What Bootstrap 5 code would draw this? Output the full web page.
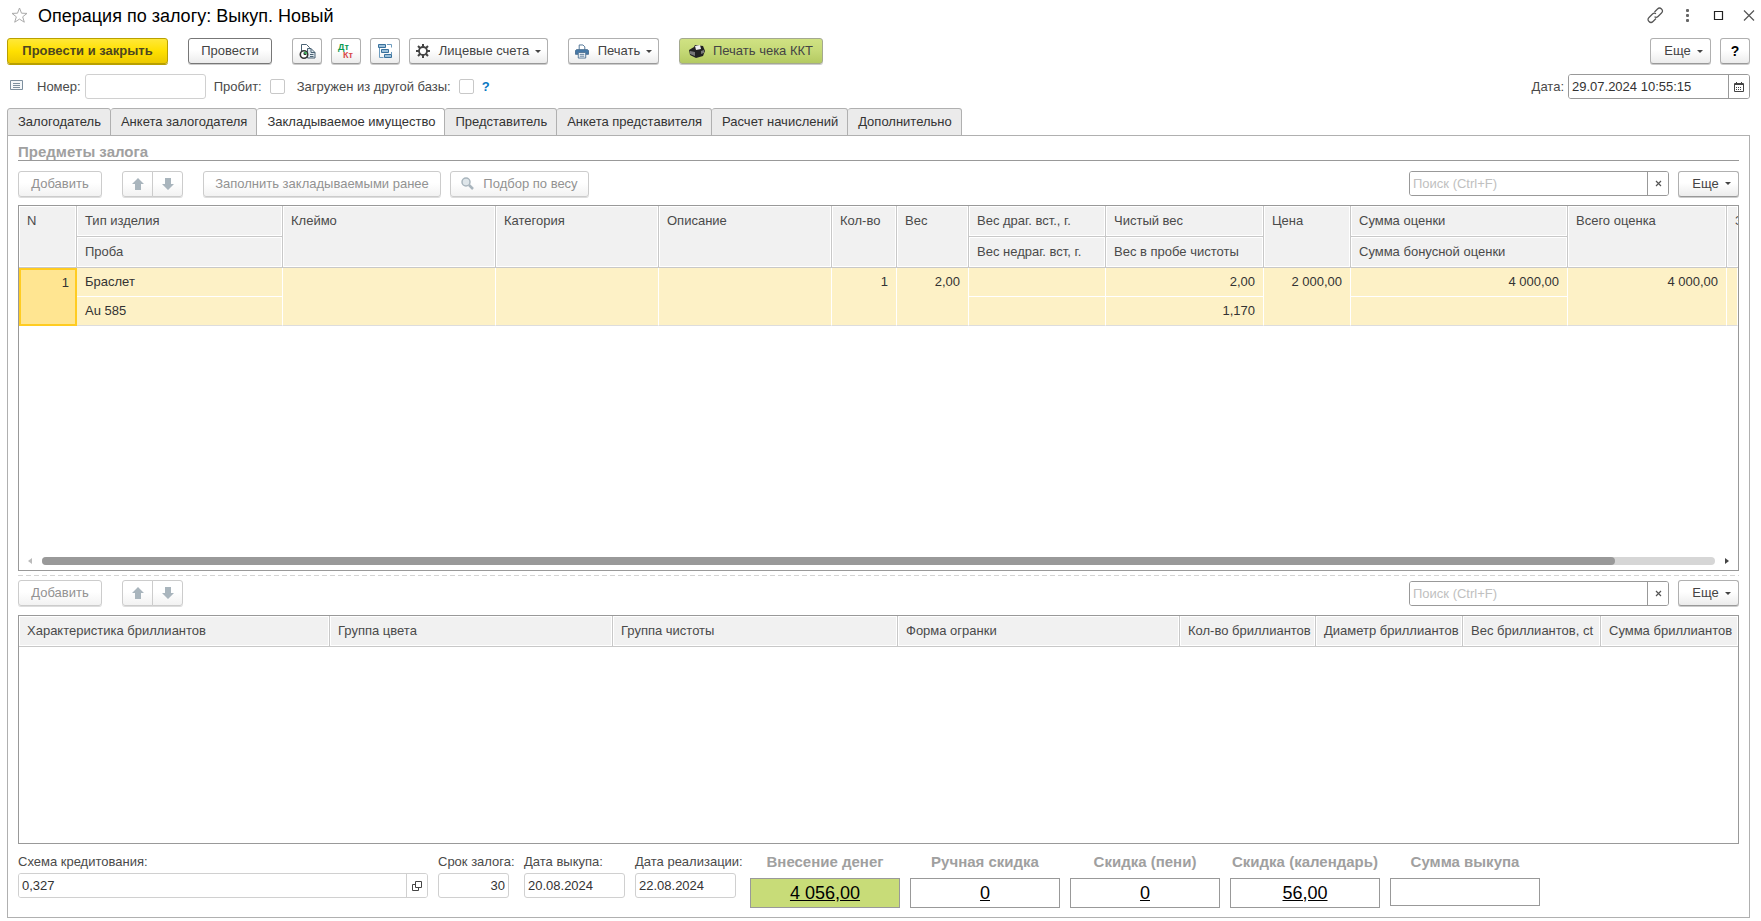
<!DOCTYPE html>
<html lang="ru">
<head>
<meta charset="utf-8">
<meta name="viewport" content="width=device-width, initial-scale=1">
<title>Операция по залогу: Выкуп. Новый</title>
<link rel="stylesheet" href="https://cdn.jsdelivr.net/npm/bootstrap@5.3.0/dist/css/bootstrap.min.css">
<style>
  body { font: 13px/16px "Liberation Sans", Arial, sans-serif; color: #4a4a4a; background: #fff; }
  .app { min-height: 100vh; padding: 0 11px 3px 7px; }
  svg { flex-shrink: 0; }
  h1 { font-size: 18px; line-height: 22px; color: #000; }
  .title-row { height: 31px; margin-right: -5px; }
  .tool-row { height: 26px; margin-top: 7px; }
  .field-row { margin-top: 10px; height: 25px; }

  .cmd { height: 26px; padding: 0 8px; border: 1px solid #b0b0b0; border-bottom-color: #999; border-radius: 3px;
    background: linear-gradient(#fff 45%, #ececec); box-shadow: 0 1px 0 #ccc; color: #444;
    font-size: 13px; line-height: 16px; display: inline-flex; align-items: center; justify-content: center; white-space: nowrap; }
  .cmd:hover { background: #f2f2f2; }
  .cmd:disabled { opacity: 1; color: #929292; border-color: #ccc; background: linear-gradient(#fff 45%, #f2f2f2); box-shadow: 0 1px 0 #ddd; }
  .cmd-main { background: linear-gradient(#ffe838, #ffe000 50%, #ecc900); border-color: #b9a000; box-shadow: 0 1px 0 #b9a000; font-weight: bold; color: #4d4620; width: 161px; }
  .cmd-plain { border-color: #777; width: 84px; }
  .cmd-green { background: linear-gradient(#d0e283, #c5d976 50%, #b4ca62); border-color: #a4a98f; width: 144px; }
  .cmd-sq { width: 30px; padding: 0; }
  .cmd-arrow { width: 31px; padding: 0; }
  .cmd-more { width: 61px; padding: 0 0 0 6px; }
  .cmd-help { font-weight: bold; font-size: 14px; color: #000; }
  .caret { border: 3px solid transparent; border-top-color: #444; border-bottom: 0; margin-left: 6px; }
  .w-acc { width: 139px; } .w-print { width: 91px; } .w-add { width: 84px; } .w-fill { width: 238px; } .w-pick { width: 139px; }
  .gap-9 { gap: 9px; } .gap-20 { gap: 20px; } .gap-10 { gap: 10px; }
  .ico { margin-right: 9px; }

  .box { height: 25px; padding: 0 3px; font-size: 13px; line-height: 16px; border: 1px solid #d0d0d0; border-radius: 3px; color: #333; background: #fff; min-width: 0; }
  .box::placeholder { color: #c0c0c0; opacity: 1; }
  .group { height: 25px; border: 1px solid #d0d0d0; border-radius: 3px; overflow: hidden; }
  .group .box { border: 0; border-radius: 0; height: 23px; flex: 1; }
  .group button { border: 0; border-left: 1px solid #d0d0d0; background: #fff; width: 21px; padding: 0; display: flex; align-items: center; justify-content: center; color: #444; }
  .group-dark, .group-dark button { border-color: #999; }
  .w-date { width: 182px; } .w-find { width: 260px; } .w-num { width: 121px; }
  .tick { appearance: none; width: 15px; height: 15px; margin: 0; border: 1px solid #c8c8c8; border-radius: 2px; background: #fff; }
  .hint { color: #0a78c2; font-weight: bold; text-decoration: none; margin-left: 8px; }
  .field-ico { margin: 0 14px 4px 3px; }

  .tabs { margin-top: 9px; margin-bottom: -1px; }
  .tabs .nav-link { height: 28px; padding: 0 9px 0 10px; border: 1px solid #b0b0b0; border-left-width: 0; border-radius: 3px 3px 0 0; background: #ebebeb; color: #333; display: flex; align-items: center; justify-content: center; }
  .tabs li:first-child .nav-link { border-left-width: 1px; }
  .tabs .nav-link.active { background: #fff; border-bottom-color: #fff; }
  .pane { border: 1px solid #b0b0b0; padding: 8px 10px 9px; flex: 1; }
  .caption { font-size: 15px; font-weight: bold; color: #a0a0a0; line-height: 16px; }
  h2.caption { border-bottom: 1px solid #999; margin: 0 0 9px; height: 17px; }
  .bar { height: 27px; }

  .frame { border: 1px solid #999; overflow: hidden; flex-basis: 0; margin-top: 8px; }
  .frame-a { flex-grow: 366; }
  .frame-b { flex-grow: 229; }
  .grid { table-layout: fixed; width: 100%; border-collapse: separate; border-spacing: 0; }
  .grid th { height: 31px; padding: 0 0 0 8px; font-weight: normal; background: #f1f1f1; border-right: 1px solid #c8c8c8; border-bottom: 1px solid #c8c8c8; box-shadow: inset 0 0 0 1px #fff; vertical-align: top; line-height: 29px; white-space: nowrap; overflow: hidden; }
  .grid td { height: 29px; padding: 0 8px; background: #fdf1c6; color: #333; border-right: 1px solid #fff; border-bottom: 1px solid #fff; vertical-align: top; line-height: 28px; white-space: nowrap; overflow: hidden; }
  .grid td.num { text-align: right; }
  .grid td.cur { background: #ffe591; border: 2px solid #fc2; line-height: 25px; padding: 0 6px; }
  .grid tbody tr:last-child td, .grid tbody td[rowspan]:not(.cur) { border-bottom-color: #ddd; }
  .grid th.edge, .frame-b th:last-child { border-right: 0; }

  .scroll { height: 14px; padding: 0 8px 3px 9px; }
  .track { height: 8px; border-radius: 4px; background: #d6d6d6; margin: 0 10px 0 9px; }
  .thumb { height: 8px; border-radius: 4px; background: #999; width: 94%; }
  .split { height: 1px; margin: 4px 0; background: repeating-linear-gradient(90deg, #d4d4d4 0 5px, #fff 5px 8px); }

  .totals { margin-top: 10px; height: 54px; }
  .totals .lab { height: 16px; margin-bottom: 3px; white-space: nowrap; display: block; }
  .w-scheme { width: 410px; } .w-term { width: 71px; } .w-day { width: 101px; }
  .apart { margin-right: 5px; }
  .sum { width: 150px; text-align: center; }
  .sum .caption { height: 16px; margin-bottom: 8px; white-space: nowrap; display: block; }
  .money { display: block; width: 100%; height: 30px; border: 1px solid #999; border-radius: 0; text-align: center; font-size: 18px; text-decoration: underline; color: #000; background: #fff; padding: 0; }
  .money-on { background: #c8dc78; }
  .money-low { height: 28px; }
</style>
</head>
<body>
<main class="app d-flex flex-column">
  <header class="title-row d-flex align-items-center gap-10">
    <svg class="ms-1" width="17" height="17" viewBox="0 0 17 17" fill="none" stroke="#aaa"><path d="M8.500 1l2 5.200 5.500.2-4.300 3.400 1.600 5.400-4.800-3.100-4.800 3.100 1.600-5.400L1 6.400l5.500-.2z"/></svg>
    <h1 class="m-0">Операция по залогу: Выкуп. Новый</h1>
    <svg class="ms-auto" width="108" height="17" viewBox="0 0 108 17" fill="none" stroke="#555" stroke-width="1.200">
      <path d="M7.500 5l3-3a2.800 2.800 0 0 1 4 4L11 9.500a2.800 2.800 0 0 1-3.500.3M9 11.500L6 14.500a2.800 2.800 0 0 1-4-4L5.500 7a2.800 2.800 0 0 1 3.500-.3"/>
      <g fill="#666" stroke="none"><rect x="39" y="2" width="3" height="3" rx="1"/><rect x="39" y="7" width="3" height="3" rx="1"/><rect x="39" y="12" width="3" height="3" rx="1"/></g>
      <path stroke="#222" d="M67.500 4.500h8v8h-8z"/><path d="M97 3.500l10 10M107 3.500l-10 10"/>
    </svg>
  </header>

  <div class="tool-row d-flex gap-20">
    <button class="btn cmd cmd-main">Провести и закрыть</button>
    <button class="btn cmd cmd-plain">Провести</button>
    <div class="d-flex gap-9">
      <button class="btn cmd cmd-sq" aria-label="История"><svg width="17" height="17" viewBox="0 0 17 17" fill="#fff" stroke="#4a6274"><path d="M2.500 12V1.500h5l3 3V12z"/><path fill="#dfe8ee" d="M8.500 5.500h3.500l4 4v5.500H8.500z"/><path fill="none" d="M12 5.500v4h4M11 11.500h3.500M11 13.500h3.500"/><circle cx="5" cy="11.500" r="3.700" fill="#fff" stroke="#333" stroke-width="1.600"/><path d="M5 11.500V8.500a3 3 0 0 1 3 3z" fill="#3cb55c" stroke="none"/><path fill="none" d="M5 9.500v2H7" stroke="#333"/></svg></button>
      <button class="btn cmd cmd-sq" aria-label="Дебет и кредит"><svg width="18" height="18" viewBox="0 0 18 18" font-family="Liberation Sans" font-size="9" font-weight="bold"><text x="1" y="8" fill="#0a9a50">Дт</text><text x="6" y="16" fill="#d8484a">Кт</text></svg></button>
      <button class="btn cmd cmd-sq" aria-label="Структура"><svg width="16" height="16" viewBox="0 0 16 16" fill="#9cc0da" stroke="#39719c"><path fill="none" d="M2.500 5v9.500h4M10 1.500h4.500v3M14.500 9v2" stroke="#6d9cbf"/><path d="M1.500 1.500h7v3h-7zM4.500 6.500h7v3h-7zM7.500 11.500h7v3h-7z"/></svg></button>
      <button class="btn cmd w-acc"><svg class="ico" width="14" height="14" viewBox="0 0 14 14" fill="none" stroke="#444"><circle cx="7" cy="7" r="4" stroke-width="1.800"/><path stroke-width="2" d="M7 0v3M7 11v3M0 7h3M11 7h3M2 2l2 2M10 10l2 2M2 12l2-2M10 4l2-2"/></svg>Лицевые счета<i class="caret"></i></button>
    </div>
    <button class="btn cmd w-print"><svg class="ico" width="14" height="15" viewBox="0 0 15 15" fill="#fff" stroke="#4a6f91"><path d="M4.500 6V.5h4l2 2V6"/><path fill="#4679a8" d="M1.500 5.500h12l1 1v4h-14v-4z"/><path d="M3.500 8.500h8v6h-8z"/><path d="M5 10.500h5M5 12.500h5"/></svg>Печать<i class="caret"></i></button>
    <button class="btn cmd cmd-green"><svg class="me-2" width="16" height="14" viewBox="0 0 16 14"><path fill="#222" d="M0 6l5-3 1-2 8 1 2 5-2 5-7 2-6-3z"/><path fill="#eee" d="M6 2l5-1 1 4-5 1z"/><path fill="#777" d="M1 7l5 1v4l-5-2zM12 7l3-1v3l-3 1z"/></svg>Печать чека ККТ</button>
    <div class="ms-auto d-flex gap-9">
      <button class="btn cmd cmd-more">Еще<i class="caret"></i></button>
      <button class="btn cmd cmd-sq cmd-help">?</button>
    </div>
  </div>

  <div class="field-row d-flex align-items-center">
    <svg class="field-ico" width="13" height="10" viewBox="0 0 13 10" fill="#f4f7f9" stroke="#7d8f9e"><path d="M.5.5h12v9H.5zM3 3.500h7M3 5.500h7M3 7.500h7"/></svg>
    <label for="num" class="me-1">Номер:</label><input id="num" class="box w-num me-2">
    <label for="probit" class="me-1 pe-1">Пробит:</label><input type="checkbox" id="probit" class="tick me-2">
    <label for="loaded" class="ms-1 me-1 pe-1">Загружен из другой базы:</label><input type="checkbox" id="loaded" class="tick"><a href="#" class="hint">?</a>
    <label for="date" class="ms-auto me-1">Дата:</label>
    <div class="group group-dark w-date d-flex"><input id="date" class="box" value="29.07.2024 10:55:15"><button aria-label="Календарь"><svg width="10" height="10" viewBox="0 0 10 10" fill="none" stroke="#444"><path d="M.5 1.500h9v8h-9zM.5 2.500h9M2.500 0v2M7.500 0v2"/><path stroke-dasharray="1 1" d="M2 5.500h6M2 7.500h6"/></svg></button></div>
  </div>

  <ul class="nav tabs">
    <li><a class="nav-link" href="#">Залогодатель</a></li>
    <li><a class="nav-link" href="#">Анкета залогодателя</a></li>
    <li><a class="nav-link active" href="#">Закладываемое имущество</a></li>
    <li><a class="nav-link" href="#">Представитель</a></li>
    <li><a class="nav-link" href="#">Анкета представителя</a></li>
    <li><a class="nav-link" href="#">Расчет начислений</a></li>
    <li><a class="nav-link" href="#">Дополнительно</a></li>
  </ul>

  <section class="pane d-flex flex-column">
    <h2 class="caption">Предметы залога</h2>
    <div class="bar d-flex align-items-center">
      <div class="d-flex gap-20">
        <button class="btn cmd w-add" disabled>Добавить</button>
        <div class="btn-group">
          <button class="btn cmd cmd-arrow" disabled aria-label="Вверх"><svg width="12" height="12" viewBox="0 0 12 12" fill="#a9b5bd"><path d="M6 0l6 6H9v6H3V6H0z"/></svg></button>
          <button class="btn cmd cmd-arrow" disabled aria-label="Вниз"><svg width="12" height="12" viewBox="0 0 12 12" fill="#a9b5bd"><path d="M6 12l6-6H9V0H3v6H0z"/></svg></button>
        </div>
        <div class="d-flex gap-9">
          <button class="btn cmd w-fill" disabled>Заполнить закладываемыми ранее</button>
          <button class="btn cmd w-pick" disabled><svg class="ico" width="13" height="13" viewBox="0 0 13 13" fill="#dfe6ea" stroke="#a9b5bd"><circle cx="5" cy="5" r="4" stroke-width="1.500"/><path stroke-width="2.500" d="M8 8l4 4"/></svg>Подбор по весу</button>
        </div>
      </div>
      <div class="ms-auto d-flex gap-9 align-items-center">
        <div class="group group-dark w-find d-flex"><input class="box" aria-label="Поиск" placeholder="Поиск (Ctrl+F)"><button aria-label="Очистить"><svg width="7" height="7" viewBox="0 0 7 7" stroke="#555" stroke-width="1.200"><path d="M1 1l5 5M6 1L1 6"/></svg></button></div>
        <button class="btn cmd cmd-more">Еще<i class="caret"></i></button>
      </div>
    </div>

    <div class="frame frame-a d-flex flex-column">
      <table class="grid">
        <colgroup><col style="width:58px"><col style="width:206px"><col style="width:213px"><col style="width:163px"><col style="width:173px"><col style="width:65px"><col style="width:72px"><col style="width:137px"><col style="width:158px"><col style="width:87px"><col style="width:217px"><col style="width:159px"><col style="width:11px"></colgroup>
        <thead>
          <tr><th rowspan="2">N</th><th>Тип изделия</th><th rowspan="2">Клеймо</th><th rowspan="2">Категория</th><th rowspan="2">Описание</th><th rowspan="2">Кол-во</th><th rowspan="2">Вес</th><th>Вес драг. вст., г.</th><th>Чистый вес</th><th rowspan="2">Цена</th><th>Сумма оценки</th><th rowspan="2">Всего оценка</th><th rowspan="2" class="edge">З</th></tr>
          <tr><th>Проба</th><th>Вес недраг. вст, г.</th><th>Вес в пробе чистоты</th><th>Сумма бонусной оценки</th></tr>
        </thead>
        <tbody>
          <tr><td rowspan="2" class="num cur">1</td><td>Браслет</td><td rowspan="2"></td><td rowspan="2"></td><td rowspan="2"></td><td rowspan="2" class="num">1</td><td rowspan="2" class="num">2,00</td><td></td><td class="num">2,00</td><td rowspan="2" class="num">2 000,00</td><td class="num">4 000,00</td><td rowspan="2" class="num">4 000,00</td><td rowspan="2"></td></tr>
          <tr><td>Au 585</td><td></td><td class="num">1,170</td><td></td></tr>
        </tbody>
      </table>
      <div class="scroll mt-auto d-flex align-items-center">
        <svg width="5" height="6" viewBox="0 0 5 6" fill="#bbb"><path d="M4 0v6L0 3z"/></svg>
        <div class="track flex-grow-1"><div class="thumb"></div></div>
        <svg width="5" height="6" viewBox="0 0 5 6" fill="#444"><path d="M0 0v6l4-3z"/></svg>
      </div>
    </div>
    <div class="split"></div>

    <div class="bar d-flex align-items-center">
      <div class="d-flex gap-20">
        <button class="btn cmd w-add" disabled>Добавить</button>
        <div class="btn-group">
          <button class="btn cmd cmd-arrow" disabled aria-label="Вверх"><svg width="12" height="12" viewBox="0 0 12 12" fill="#a9b5bd"><path d="M6 0l6 6H9v6H3V6H0z"/></svg></button>
          <button class="btn cmd cmd-arrow" disabled aria-label="Вниз"><svg width="12" height="12" viewBox="0 0 12 12" fill="#a9b5bd"><path d="M6 12l6-6H9V0H3v6H0z"/></svg></button>
        </div>
      </div>
      <div class="ms-auto d-flex gap-9 align-items-center">
        <div class="group group-dark w-find d-flex"><input class="box" aria-label="Поиск" placeholder="Поиск (Ctrl+F)"><button aria-label="Очистить"><svg width="7" height="7" viewBox="0 0 7 7" stroke="#555" stroke-width="1.200"><path d="M1 1l5 5M6 1L1 6"/></svg></button></div>
        <button class="btn cmd cmd-more">Еще<i class="caret"></i></button>
      </div>
    </div>

    <div class="frame frame-b">
      <table class="grid">
        <colgroup><col style="width:311px"><col style="width:283px"><col style="width:285px"><col style="width:282px"><col style="width:136px"><col style="width:147px"><col style="width:138px"><col style="width:137px"></colgroup>
        <thead><tr><th>Характеристика бриллиантов</th><th>Группа цвета</th><th>Группа чистоты</th><th>Форма огранки</th><th>Кол-во бриллиантов</th><th>Диаметр бриллиантов</th><th>Вес бриллиантов, ct</th><th>Сумма бриллиантов</th></tr></thead>
      </table>
    </div>

    <div class="totals d-flex gap-10">
      <div class="w-scheme"><label class="lab" for="scheme">Схема кредитования:</label>
        <div class="group d-flex"><input id="scheme" class="box" value="0,327"><button aria-label="Открыть"><svg width="10" height="10" viewBox="0 0 10 10" fill="none" stroke="#444"><path d="M3.500.5h6v6h-6zM3 3.500H.5v6h6V7"/></svg></button></div></div>
      <div class="w-term apart"><label class="lab" for="term">Срок залога:</label><input id="term" class="box w-100 text-end" value="30"></div>
      <div class="w-day"><label class="lab" for="buy">Дата выкупа:</label><input id="buy" class="box w-100" value="20.08.2024"></div>
      <div class="w-day me-1"><label class="lab" for="sale">Дата реализации:</label><input id="sale" class="box w-100" value="22.08.2024"></div>
      <div class="sum"><label class="caption" for="m1">Внесение денег</label><input id="m1" class="money money-on" value="4 056,00"></div>
      <div class="sum"><label class="caption" for="m2">Ручная скидка</label><input id="m2" class="money" value="0"></div>
      <div class="sum"><label class="caption" for="m3">Скидка (пени)</label><input id="m3" class="money" value="0"></div>
      <div class="sum"><label class="caption" for="m4">Скидка (календарь)</label><input id="m4" class="money" value="56,00"></div>
      <div class="sum"><label class="caption" for="m5">Сумма выкупа</label><input id="m5" class="money money-low"></div>
    </div>
  </section>
</main>
<script src="https://cdn.jsdelivr.net/npm/bootstrap@5.3.0/dist/js/bootstrap.bundle.min.js"></script>
</body>
</html>
